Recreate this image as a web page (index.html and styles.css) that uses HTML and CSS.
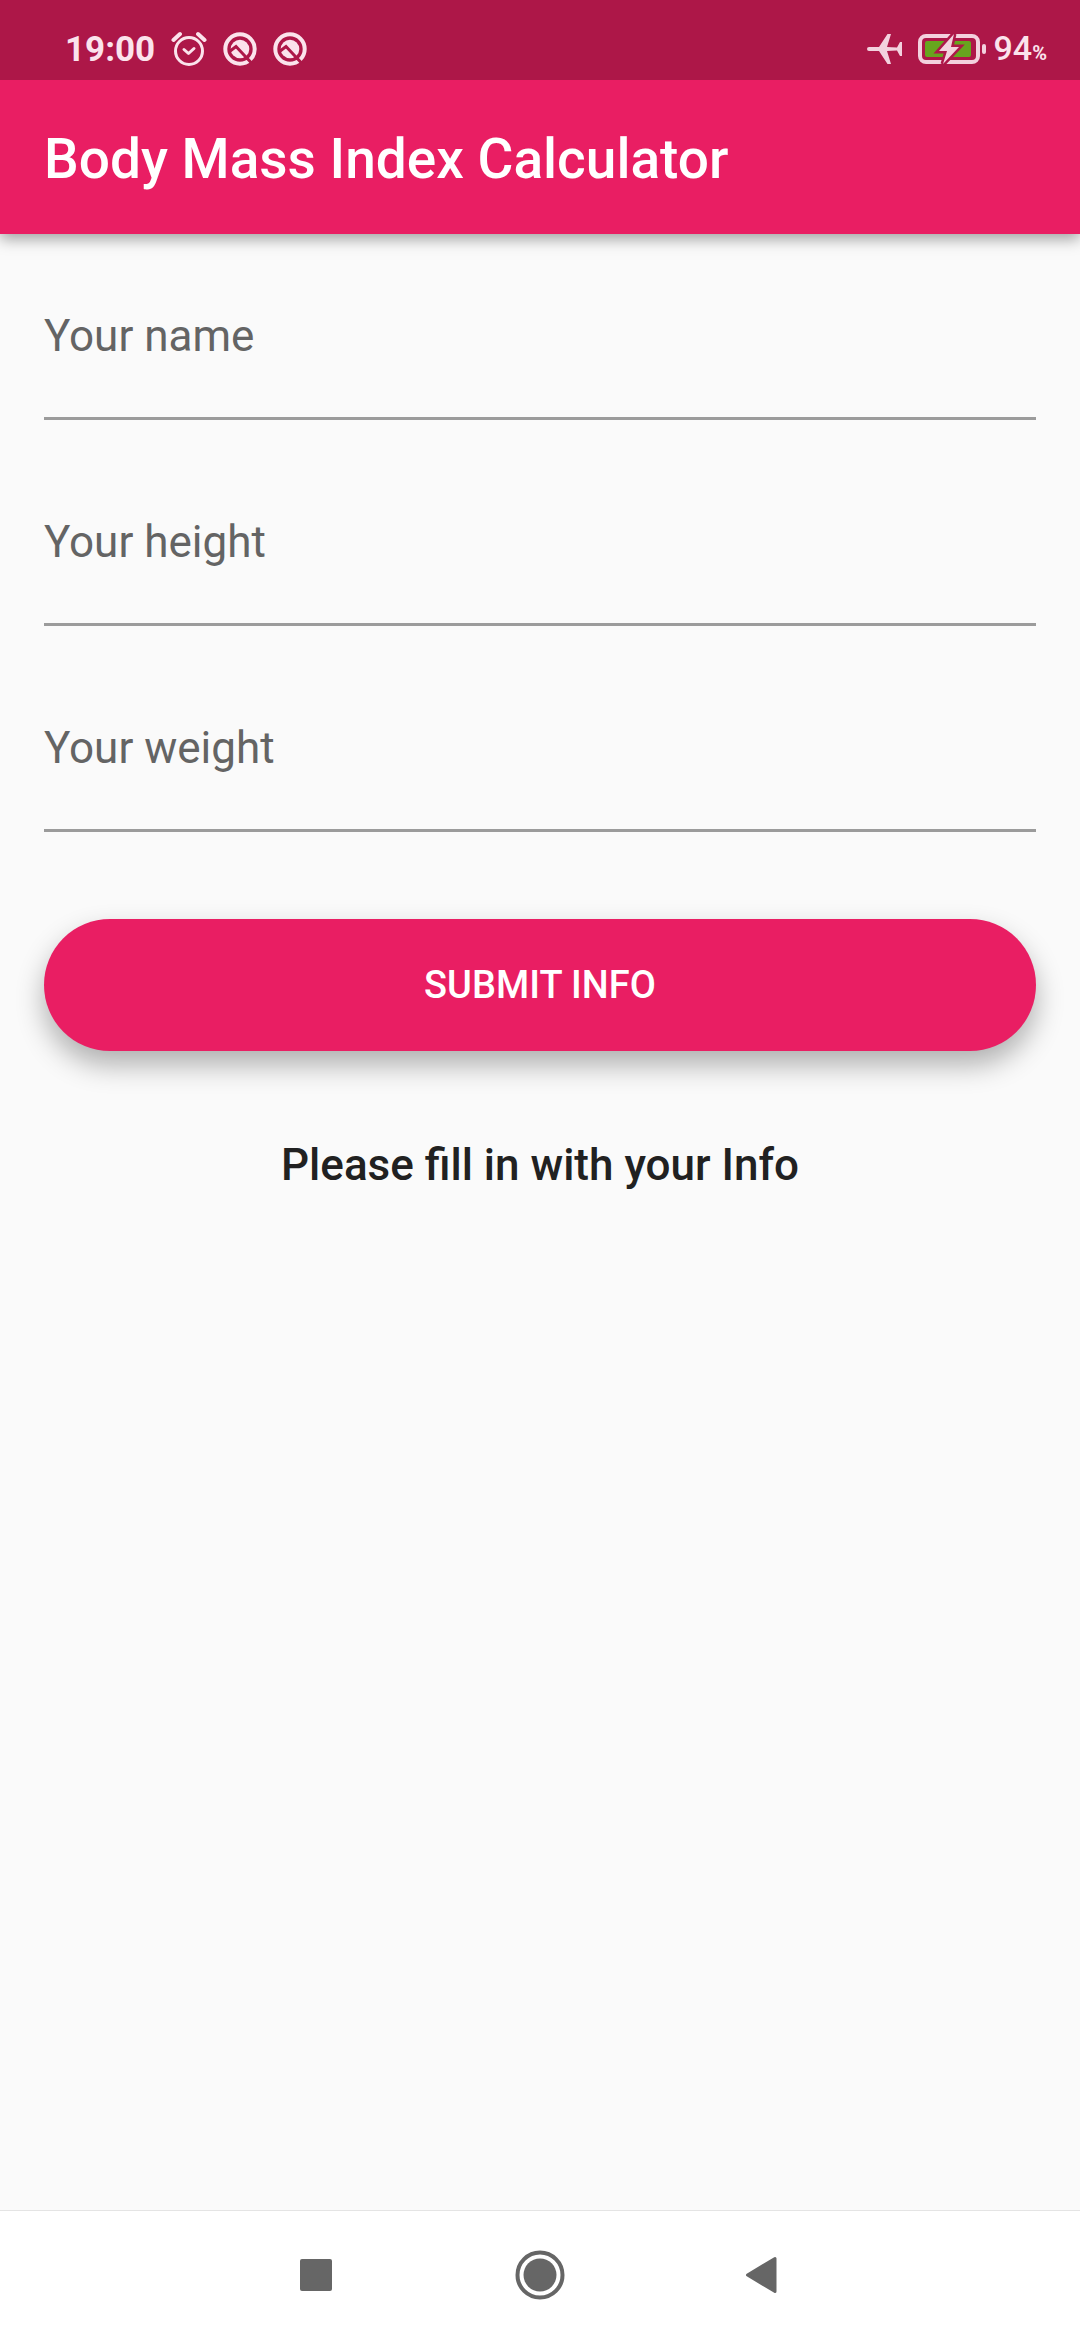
FILE: index.html
```html
<!DOCTYPE html>
<html lang="en">
<head>
  <meta charset="utf-8">
  <meta name="viewport" content="width=device-width, initial-scale=1">
  <title>Body Mass Index Calculator</title>
  <link rel="stylesheet" href="styles.css">
</head>
<body>
  <div class="screen">
    <div class="status-bar">
      <div class="status-group">
        <span class="clock">19:00</span>
        <svg class="icon-alarm" width="36" height="36" viewBox="0 0 36 36" fill="none" stroke="currentColor" stroke-width="3" stroke-linecap="round" stroke-linejoin="round" aria-hidden="true">
          <circle cx="18" cy="20" r="13.5"/>
          <path d="M13 18.500L17.500 22.500L23 17.500"/>
          <path d="M2.500 9L9 3M27 3L33.500 9" stroke-width="4"/>
        </svg>
        <svg class="icon-app" width="34" height="34" viewBox="0 0 34 34" aria-hidden="true">
          <g id="app-mark">
            <circle cx="17" cy="17" r="14.700" fill="none" stroke="currentColor" stroke-width="4"/>
            <circle cx="17" cy="17" r="9.300" fill="currentColor"/>
            <path d="M6.500 19.500L13 14.500L29 31.500" fill="none" stroke="#ad1748" stroke-width="3"/>
          </g>
        </svg>
        <svg class="icon-app" width="34" height="34" viewBox="0 0 34 34" aria-hidden="true">
          <use href="#app-mark"/>
        </svg>
      </div>
      <div class="status-group">
        <svg class="icon-plane" width="36" height="32" viewBox="0 0 36 32" fill="currentColor" aria-hidden="true">
          <path d="M3 14H13L21.500 1H25L21 14L31 14.500L34 9H36V23H34L31 17.500L21 18L25 31H21.500L13 18H3A2 2 0 0 1 3 14Z"/>
        </svg>
        <svg class="icon-battery" width="68" height="32" viewBox="0 0 68 32" aria-hidden="true">
          <rect x="2" y="3" width="58" height="26" rx="6" fill="none" stroke="currentColor" stroke-width="4"/>
          <rect x="7" y="8" width="46" height="16" rx="2" fill="#67a51e"/>
          <rect x="64" y="11" width="4" height="10" rx="2" fill="currentColor"/>
          <path d="M36 1L21 18H29L25 31L41 14H33L36 1Z" fill="currentColor" stroke="#ad1748" stroke-width="5" paint-order="stroke"/>
        </svg>
        <span class="battery-level">94<span class="percent">%</span></span>
      </div>
    </div>

    <header class="app-bar">
      <h1 class="app-title">Body Mass Index Calculator</h1>
    </header>

    <main class="content">
      <form class="bmi-form">
        <div class="field">
          <label class="field-label" for="name">Your name</label>
          <input class="field-input" id="name" type="text">
        </div>
        <div class="field">
          <label class="field-label" for="height">Your height</label>
          <input class="field-input" id="height" type="text" inputmode="decimal">
        </div>
        <div class="field">
          <label class="field-label" for="weight">Your weight</label>
          <input class="field-input" id="weight" type="text" inputmode="decimal">
        </div>
        <button class="submit" type="button">SUBMIT INFO</button>
      </form>
      <p class="message">Please fill in with your Info</p>
    </main>

    <nav class="nav-bar">
      <button class="nav-button" type="button" aria-label="Recent apps">
        <svg width="50" height="50" viewBox="0 0 50 50" fill="currentColor" aria-hidden="true">
          <rect x="9" y="9" width="32" height="32" rx="2"/>
        </svg>
      </button>
      <button class="nav-button" type="button" aria-label="Home">
        <svg width="50" height="50" viewBox="0 0 50 50" fill="currentColor" aria-hidden="true">
          <circle cx="25" cy="25" r="22.500" fill="none" stroke="currentColor" stroke-width="4"/>
          <circle cx="25" cy="25" r="16.500"/>
        </svg>
      </button>
      <button class="nav-button" type="button" aria-label="Back">
        <svg width="50" height="50" viewBox="0 0 50 50" fill="currentColor" stroke="currentColor" stroke-width="3" stroke-linejoin="round" aria-hidden="true">
          <path d="M8.500 25L36 8.500V41.500Z"/>
        </svg>
      </button>
    </nav>
  </div>
</body>
</html>
```
FILE: styles.css
```css
* {
  box-sizing: border-box;
}

body {
  margin: 0;
  background: #fafafa;
  color: #212121;
  font-family: Roboto, "Noto Sans", sans-serif;
}

button,
input {
  font: inherit;
  border: 0;
  padding: 0;
}

svg {
  display: block;
}

.screen {
  display: flex;
  flex-direction: column;
  min-height: 100vh;
}

.status-bar {
  z-index: 1;
  display: flex;
  justify-content: space-between;
  padding: 19px 33px 0 65px;
  height: 80px;
  background: #ad1748;
  color: #fbe3ec;
}

.status-group {
  display: flex;
  align-items: center;
  height: 60px;
}

.clock {
  padding-top: 2px;
  font-size: 35px;
  line-height: 60px;
  font-weight: 700;
}

.icon-alarm {
  margin-left: 16px;
}

.icon-app {
  margin-left: 16px;
}

.icon-plane,
.icon-battery {
  color: #f3d1de;
}

.icon-battery {
  margin: 0 8px 0 16px;
}

.battery-level {
  padding-top: 2px;
  font-size: 34px;
  line-height: 60px;
  font-weight: 500;
}

.percent {
  font-size: 20px;
  font-weight: 700;
}

.app-bar {
  padding: 47px 44px 43px;
  background: #e91e63;
  color: #ffffff;
  box-shadow: 0 5px 14px rgba(0, 0, 0, 0.36);
}

.app-title {
  margin: 0;
  font-size: 55px;
  line-height: 64px;
  font-weight: 500;
}

.content {
  flex: 1;
  padding: 76px 44px 44px;
}

.bmi-form {
  display: flex;
  flex-direction: column;
  gap: 96px;
}

.field {
  display: flex;
  flex-direction: column;
}

.field-label {
  color: #646464;
  font-size: 44px;
  line-height: 52px;
}

.field-input {
  width: 100%;
  height: 58px;
  border-bottom: 3px solid #9b9b9b;
  border-radius: 0;
  background: transparent;
  color: #212121;
  font-size: 44px;
  outline: none;
}

.submit {
  height: 132px;
  margin-top: -9px;
  border-radius: 66px;
  background: #e91e63;
  color: #ffffff;
  font-size: 38px;
  line-height: 44px;
  font-weight: 500;
  box-shadow: 0 14px 28px rgba(0, 0, 0, 0.3);
}

.message {
  margin: 88px 0 0;
  font-size: 44px;
  line-height: 52px;
  font-weight: 500;
  text-align: center;
}

.nav-bar {
  display: flex;
  justify-content: center;
  gap: 174px;
  padding: 39px 0 40px;
  border-top: 1px solid #e4e4e4;
  background: #ffffff;
}

.nav-button {
  background: transparent;
  color: #666666;
}
```
